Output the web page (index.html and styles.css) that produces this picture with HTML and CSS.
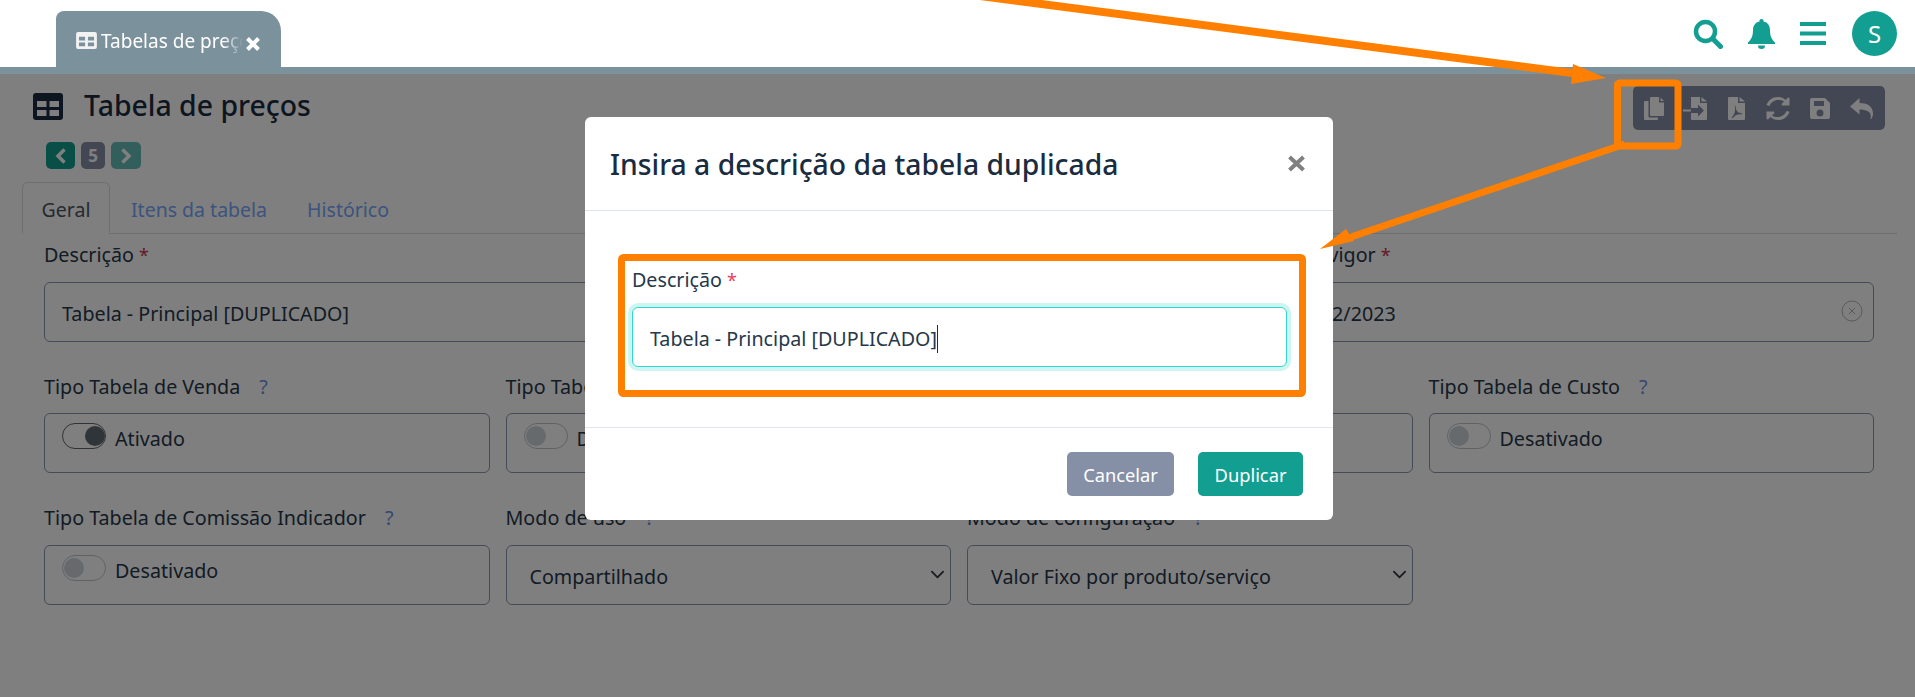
FILE: index.html
```html
<!DOCTYPE html>
<html lang="pt-BR">
<head>
    <meta charset="UTF-8">
    <title>Tabela de preços</title>
    <link rel="stylesheet" href="styles.css">
</head>
<body>
    <header class="topbar">
        <div class="app-tab">
            <svg class="app-tab-icon" viewBox="0 0 22 18"><path fill-rule="evenodd" d="M2 0h18a2 2 0 0 1 2 2v14a2 2 0 0 1-2 2H2a2 2 0 0 1-2-2V2a2 2 0 0 1 2-2zM3 5v4h6.500V5zM12.500 5v4H19V5zM3 11v4h6.500v-4zM12.500 11v4H19v-4z"/></svg>
            <span class="app-tab-name">Tabelas de preços</span>
            <svg class="app-tab-close" viewBox="0 0 14 14"><path d="M1.500 1.500l11 11M12.500 1.500l-11 11"/></svg>
        </div>
        <div class="topbar-actions">
            <svg class="top-icon" width="30" height="30" viewBox="0 0 30 30"><circle cx="12.500" cy="12.500" r="9.500" fill="none" stroke="currentColor" stroke-width="4.500"/><path d="M19.500 19.500l8 8" stroke="currentColor" stroke-width="5" stroke-linecap="round"/></svg>
            <svg class="top-icon" width="27" height="30" viewBox="0 0 27 30"><path fill="currentColor" d="M13.500 0a2 2 0 0 1 2 2.400c4.300.9 6.500 4.300 6.500 8.600 0 6 1.500 9 5 12.500v1.500H0v-1.500C3.500 20 5 17 5 11c0-4.300 2.200-7.700 6.500-8.600a2 2 0 0 1 2-2.400zM10 26.500h7a3.500 3.500 0 0 1-7 0z"/></svg>
            <svg class="top-icon" width="26" height="23" viewBox="0 0 26 23"><path fill="currentColor" d="M0 0h26v4H0zM0 9.500h26v4H0zM0 19h26v4H0z"/></svg>
            <div class="avatar">S</div>
        </div>
    </header>
    <div class="strip"></div>

    <main class="content">
        <div class="page-head">
            <div>
                <h1 class="page-title">
                    <svg class="page-title-icon" viewBox="0 0 30 27"><path fill-rule="evenodd" d="M3 0h24a3 3 0 0 1 3 3v21a3 3 0 0 1-3 3H3a3 3 0 0 1-3-3V3a3 3 0 0 1 3-3zM4 8v6h9.500V8zM16.500 8v6H26V8zM4 17v6h9.500v-6zM16.500 17v6H26v-6z"/></svg>
                    Tabela de preços
                </h1>
                <div class="pager">
                    <span class="pager-btn"><svg viewBox="0 0 12 18" width="12" height="18"><path d="M9.500 2.500L3 9l6.500 6.500"/></svg></span>
                    <span class="pager-count">5</span>
                    <span class="pager-btn pager-btn-off"><svg viewBox="0 0 12 18" width="12" height="18"><path d="M2.500 2.500L9 9l-6.500 6.500"/></svg></span>
                </div>
            </div>
            <div class="toolbar">
                <span class="tool"><svg viewBox="0 0 20 23" width="20" height="23"><path d="M7 0h8v5.500h5V18a1 1 0 0 1-1 1H7a1 1 0 0 1-1-1V1a1 1 0 0 1 1-1zM16.500 0.500L20 4h-3.500zM4.500 4v15.500a1 1 0 0 0 1 1H14V22a1 1 0 0 1-1 1H1a1 1 0 0 1-1-1V5a1 1 0 0 1 1-1z"/></svg></span>
                <span class="tool"><svg viewBox="0 0 24 23" width="24" height="23"><path d="M8 0h9v6h7v16a1 1 0 0 1-1 1H9a1 1 0 0 1-1-1v-6h7v3.500l6-6-6-6V11H8V1a1 1 0 0 1 0-1zM18.500 0L24 4.500h-5.500zM0 12.500h8v2H0z"/></svg></span>
                <span class="tool"><svg viewBox="0 0 17 23" width="17" height="23" fill-rule="evenodd"><path d="M1 0h9v6h7v16a1 1 0 0 1-1 1H1a1 1 0 0 1-1-1V1a1 1 0 0 1 1-1zM11.500 0L17 4.500h-5.500zM7.800 8.500c-.3 2.500.3 4.500 1.500 6 1 1 2.500 1.500 4.700 1.700v1c-2.500-.1-4.500.3-6 1-1 .5-2.300 2-3.500 3l-1-.8c1.500-1.500 2.200-2.500 2.800-4 .7-1.800 1-4 .6-6.900z"/></svg></span>
                <span class="tool"><svg viewBox="0 0 24 23" width="24" height="23"><path d="M12 0c3 0 5.500 1.100 7.500 3L22 .5 23.500 1v7.500H16l-.5-1.500 2.500-2.500C16.500 3.300 14.500 3 12 3 8 3 5 5.500 3.500 9L.5 8.300C2 3.500 6.500 0 12 0zM.5 14.500H8l.5 1.500L6 18.500C7.500 19.700 9.500 20 12 20c4 0 7-2.500 8.500-6l3 .7C22 19.500 17.500 23 12 23c-3 0-5.500-1.100-7.500-3L2 22.500.5 22z"/></svg></span>
                <span class="tool"><svg viewBox="0 0 20 21" width="20" height="21" fill-rule="evenodd"><path d="M2 0h13l5 5v14a2 2 0 0 1-2 2H2a2 2 0 0 1-2-2V2a2 2 0 0 1 2-2zM4 3v5h10V3zM10 11.500a3.500 3.500 0 1 0 0 7 3.500 3.500 0 0 0 0-7z"/></svg></span>
                <span class="tool"><svg viewBox="0 0 23 21" width="23" height="21"><path d="M9.500 0v5C17 5 23 8 23 15.500c0 2.200-.7 4-1.700 5.500h-.8c.4-1.500.5-3 .2-4.300-.7-3-4.700-5.200-11.200-5.200v5L0 8.500z"/></svg></span>
            </div>
        </div>

        <nav class="tabs">
            <a class="tab tab-active">Geral</a>
            <a class="tab">Itens da tabela</a>
            <a class="tab tab-last">Histórico</a>
        </nav>

        <form class="form">
            <div class="form-top">
                <div class="field">
                    <label class="field-label">Descrição <span class="req">*</span></label>
                    <div class="input">Tabela - Principal [DUPLICADO]</div>
                </div>
                <div class="field field-date">
                    <label class="field-label">Início vigor <span class="req">*</span></label>
                    <div class="input input-date">01/12/2023
                        <svg class="clear-icon" viewBox="0 0 22 22" width="22" height="22"><circle cx="11" cy="11" r="10"/><path d="M8 8l6 6M14 8l-6 6"/></svg>
                    </div>
                </div>
            </div>
            <div class="form-grid">
                <div class="field">
                    <label class="field-label">Tipo Tabela de Venda <span class="help">?</span></label>
                    <div class="input input-switch"><span class="switch switch-on"></span>Ativado</div>
                </div>
                <div class="field">
                    <label class="field-label">Tipo Tabela de Compra <span class="help">?</span></label>
                    <div class="input input-switch"><span class="switch"></span>Desativado</div>
                </div>
                <div class="field">
                    <label class="field-label">Tipo Tabela de Comissão <span class="help">?</span></label>
                    <div class="input input-switch"><span class="switch"></span>Desativado</div>
                </div>
                <div class="field">
                    <label class="field-label">Tipo Tabela de Custo <span class="help">?</span></label>
                    <div class="input input-switch"><span class="switch"></span>Desativado</div>
                </div>
                <div class="field">
                    <label class="field-label">Tipo Tabela de Comissão Indicador <span class="help">?</span></label>
                    <div class="input input-switch"><span class="switch"></span>Desativado</div>
                </div>
                <div class="field">
                    <label class="field-label">Modo de uso <span class="help">?</span></label>
                    <select class="select"><option>Compartilhado</option></select>
                </div>
                <div class="field">
                    <label class="field-label">Modo de configuração <span class="help">?</span></label>
                    <select class="select"><option>Valor Fixo por produto/serviço</option></select>
                </div>
            </div>
        </form>
    </main>

    <div class="backdrop"></div>

    <div class="modal">
        <div class="modal-head">
            <h2 class="modal-title">Insira a descrição da tabela duplicada</h2>
            <svg class="modal-close" viewBox="0 0 19 17" width="19" height="17"><path d="M2.500 2l14 13M16.500 2l-14 13"/></svg>
        </div>
        <div class="modal-body">
            <label class="field-label">Descrição <span class="req req-bright">*</span></label>
            <div class="input input-focus"><span class="caret-text">Tabela - Principal [DUPLICADO]</span></div>
        </div>
        <div class="modal-foot">
            <button class="btn btn-muted" type="button">Cancelar</button>
            <button class="btn btn-primary" type="button">Duplicar</button>
        </div>
    </div>

    <!-- setas e caixas laranja do tutorial -->
    <svg class="marks" width="1915" height="697" viewBox="0 0 1915 697">
        <path class="mark-line" d="M980 -4L1580 74"/>
        <path class="mark-fill" d="M1573 64L1606 78L1571 84Z"/>
        <rect class="mark-box" x="1617.500" y="83" width="60.500" height="63" rx="2"/>
        <path class="mark-line mark-line-thin" d="M1625 144L1345 239"/>
        <path class="mark-fill" d="M1346 229L1320 249L1354 241Z"/>
        <rect class="mark-box" x="621.500" y="257.500" width="681" height="136" rx="2"/>
    </svg>
</body>
</html>
```

FILE: styles.css
```css
* {
    box-sizing: border-box;
}
html, body {
    margin: 0;
    height: 697px;
    overflow: hidden;
}
body {
    position: relative;
    background-color: #fff;
    font-family: "Noto Sans", "Open Sans", sans-serif;
    font-size: 19.7px;
    color: #26384a;
}

/* topo */
.topbar {
    height: 67px;
    padding-left: 56px;
    display: flex;
    align-items: flex-end;
    justify-content: space-between;
    background-color: #fff;
}
.strip {
    height: 7px;
    background-color: #7b919c;
}
.app-tab {
    width: 225px;
    height: 56px;
    padding: 21px 20px 0 20px;
    display: flex;
    align-items: flex-start;
    background-color: #7b919c;
    border-radius: 8px 20px 0 0;
    color: #fff;
}
.app-tab-icon {
    width: 21px;
    height: 17px;
    flex: none;
    fill: #f2f2f2;
}
.app-tab-name {
    width: 150px;
    margin: -3px 0 0 4px;
    white-space: nowrap;
    line-height: 24px;
    font-size: 19px;
    -webkit-mask-image: linear-gradient(to right, #000 122px, transparent 142px);
    mask-image: linear-gradient(to right, #000 122px, transparent 142px);
}
.app-tab-close {
    width: 14px;
    height: 14px;
    flex: none;
    margin: 5px 0 0 -5px;
    fill: none;
    stroke: #fff;
    stroke-width: 4;
}
.topbar-actions {
    align-self: flex-start;
    display: flex;
    align-items: center;
    margin: 11px 18px 0 0;
}
.top-icon {
    color: #129e91;
    margin-right: 25px;
}
.top-icon:nth-child(3) {
    margin-right: 26px;
}
.avatar {
    width: 45px;
    height: 45px;
    border-radius: 50%;
    background-color: #129e91;
    color: #fff;
    font-size: 24px;
    display: flex;
    align-items: center;
    justify-content: center;
}

/* conteudo */
.content {
    padding: 12px 18px 0 22px;
}
.page-head {
    display: flex;
    justify-content: space-between;
    align-items: flex-start;
    height: 96px;
}
.page-title {
    margin: 1px 0 0 11px;
    height: 36px;
    display: flex;
    align-items: center;
    gap: 21px;
    font-size: 28.4px;
    font-weight: 500;
    line-height: 36px;
    color: #1a2c40;
}
.page-title-icon {
    width: 30px;
    height: 27px;
    margin-top: 2px;
    fill: #1a2c40;
}
.pager {
    display: flex;
    align-items: center;
    gap: 6px;
    margin: 19px 0 0 24px;
}
.pager-btn {
    width: 29px;
    height: 27px;
    border-radius: 5px;
    background-color: #129e91;
    display: flex;
    align-items: center;
    justify-content: center;
}
.pager-btn svg {
    fill: none;
    stroke: #fff;
    stroke-width: 3.5;
}
.pager-btn-off {
    width: 30px;
    opacity: 0.65;
}
.pager-count {
    width: 24px;
    height: 27px;
    margin-top: -1px;
    border-radius: 5px;
    background-color: #858fa6;
    color: #fff;
    font-size: 17px;
    font-weight: 700;
    line-height: 27px;
    text-align: center;
}
.toolbar {
    display: flex;
    align-items: center;
    width: 252px;
    height: 44px;
    margin-right: 12px;
    border-radius: 5px;
    background-color: #858fa6;
}
.tool {
    width: 41.5px;
    display: flex;
    justify-content: center;
}
.tool svg {
    fill: #fff;
}

.tabs {
    display: flex;
    height: 52px;
    border-bottom: 1px solid #d8dde3;
}
.tab {
    height: 52px;
    padding: 0 20px;
    font-size: 19.5px;
    line-height: 54px;
    color: #78a8fa;
    border: 1px solid transparent;
}
.tab-active {
    width: 88px;
    padding: 0;
    text-align: center;
    color: #4a5560;
    background-color: #fff;
    border-color: #d8dde3 #d8dde3 #fff;
    border-radius: 6px 6px 0 0;
}
.tab-last {
    padding-left: 18px;
}

/* formulario */
.form {
    padding: 6px 23px 0 22px;
}
.form-top {
    display: flex;
    gap: 16px;
    margin-bottom: 30px;
}
.form-top .field {
    flex: 1;
}
.form-top .field-date {
    flex: none;
    width: 601px;
}
.form-grid {
    display: grid;
    grid-template-columns: repeat(4, 1fr);
    gap: 30px 16px;
}
.field-label {
    display: block;
    height: 30px;
    margin-bottom: 11.5px;
    line-height: 30px;
    white-space: nowrap;
}
.req {
    font-size: 18px;
    color: #c8324a;
}
.req-bright {
    color: #e8405c;
}
.help {
    margin-left: 14px;
    color: #6b8fe0;
}
.input {
    height: 60px;
    padding: 3px 17px 0;
    display: flex;
    align-items: center;
    border: 1px solid #8d99ad;
    border-radius: 6px;
    background-color: #fff;
    white-space: nowrap;
}
.input-date {
    justify-content: space-between;
    padding-right: 10px;
}
.clear-icon {
    margin-top: -5px;
    fill: none;
    stroke: #b5b5b5;
    stroke-width: 1;
}
.input-switch {
    align-items: flex-start;
    padding: 9px 0 0 17px;
    line-height: 32px;
}
.switch {
    position: relative;
    flex: none;
    width: 44px;
    height: 26px;
    margin: 0 9px 0 0;
    border: 1px solid #bfc5ca;
    border-radius: 13px;
}
.switch::after {
    content: "";
    position: absolute;
    left: 1px;
    top: 2px;
    width: 20px;
    height: 20px;
    border-radius: 50%;
    background-color: #cdd5db;
}
.switch-on {
    border-color: #5c666e;
}
.switch-on::after {
    left: 22px;
    background-color: #5f6b73;
}
.select {
    width: 100%;
    height: 60px;
    padding: 3px 30px 0 23px;
    border: 1px solid #8d99ad;
    border-radius: 6px;
    background-color: #fff;
    background-image: url("data:image/svg+xml,%3csvg xmlns='http://www.w3.org/2000/svg' viewBox='0 0 16 16'%3e%3cpath fill='none' stroke='%23343a40' stroke-linecap='round' stroke-linejoin='round' stroke-width='2' d='m2 5 6 6 6-6'/%3e%3c/svg%3e");
    background-repeat: no-repeat;
    background-position: right 5px center;
    background-size: 15px 15px;
    -webkit-appearance: none;
    appearance: none;
    font: inherit;
    color: inherit;
}

/* modal */
.backdrop {
    position: absolute;
    left: 0;
    right: 0;
    top: 74px;
    bottom: 0;
    background-color: rgba(0, 0, 0, 0.5);
}
.modal {
    position: absolute;
    left: 585px;
    top: 117px;
    width: 748px;
    height: 403px;
    background-color: #fff;
    border-radius: 6px;
    display: flex;
    flex-direction: column;
}
.modal-head {
    height: 94px;
    padding: 0 27px 0 25px;
    display: flex;
    align-items: center;
    justify-content: space-between;
    border-bottom: 1px solid #dfe3ea;
}
.modal-title {
    margin: 0;
    font-size: 28.3px;
    font-weight: 500;
    color: #1a2c40;
}
.modal-close {
    fill: none;
    stroke: #808080;
    stroke-width: 4;
}
.modal-body {
    height: 217px;
    padding: 54px 46px 0 47px;
    border-bottom: 1px solid #e3e6ea;
}
.input-focus {
    padding-top: 5px;
    border-color: #2fd8cc;
    box-shadow: 0 0 0 4px #cdf5f2;
}
.caret-text {
    border-right: 1px solid #1a2c40;
    line-height: 28px;
}
.modal-foot {
    flex: 1;
    padding: 24px 30px 0 0;
    display: flex;
    justify-content: flex-end;
    gap: 24px;
}
.btn {
    height: 44px;
    padding: 0;
    border: none;
    border-radius: 5px;
    font: inherit;
    font-size: 18.3px;
    color: #fff;
}
.btn-muted {
    background-color: #858fa6;
    width: 107px;
}
.btn-primary {
    background-color: #129e91;
    width: 105px;
}

/* marcacoes */
.marks {
    position: absolute;
    left: 0;
    top: 0;
}
.mark-line {
    fill: none;
    stroke: #ff8000;
    stroke-width: 8;
}
.mark-line-thin {
    stroke-width: 7;
}
.mark-fill {
    fill: #ff8000;
}
.mark-box {
    fill: none;
    stroke: #ff8000;
    stroke-width: 7;
}
```
